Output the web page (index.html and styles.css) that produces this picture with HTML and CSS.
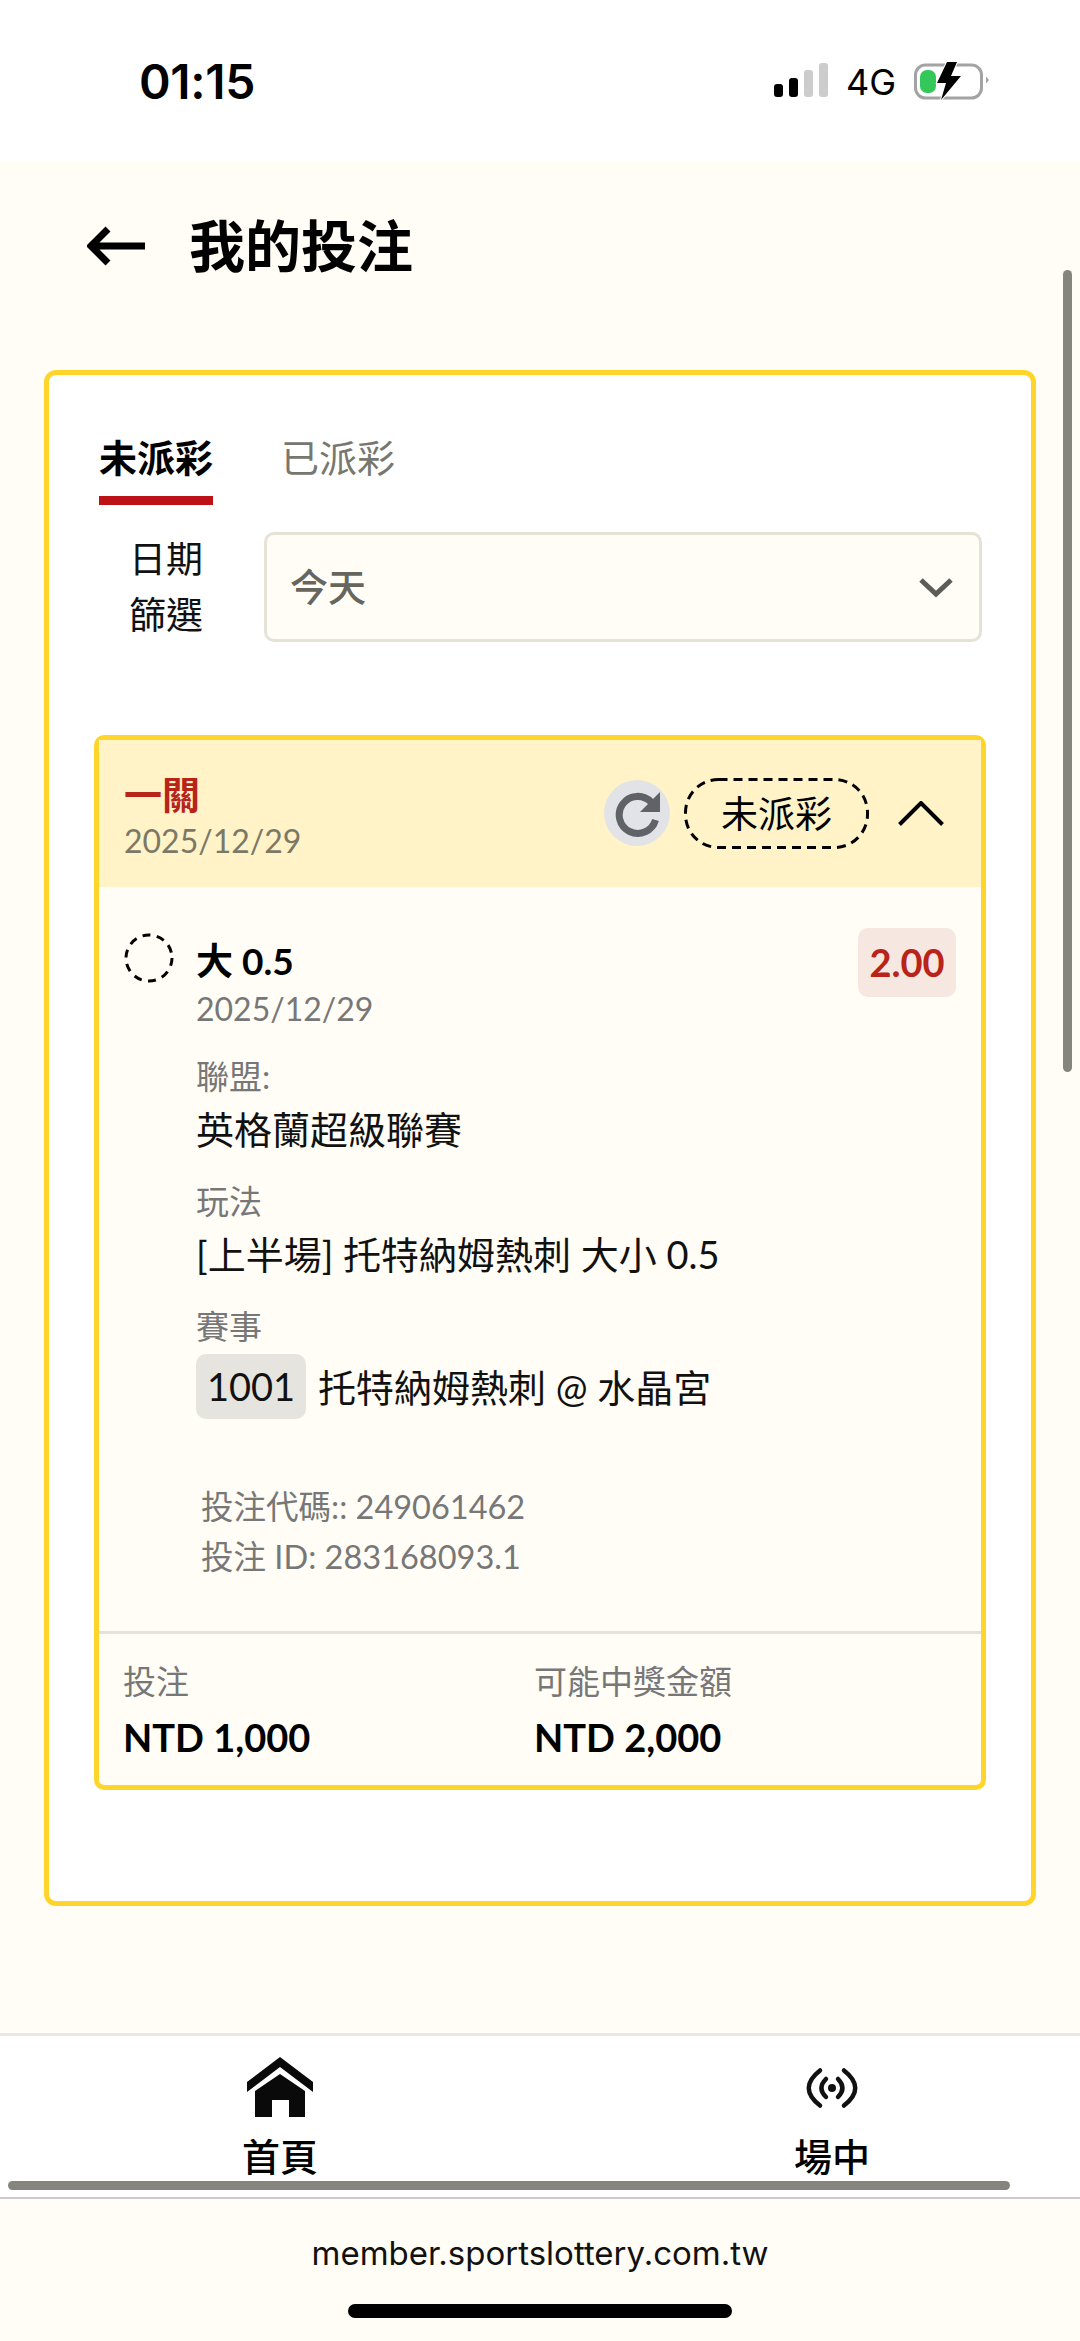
FILE: index.html
```html
<!DOCTYPE html>
<html lang="zh-Hant">

<head>
    <meta charset="UTF-8">
    <meta name="viewport" content="width=device-width, initial-scale=1.0">
    <title>我的投注</title>
    <link rel="stylesheet" href="styles.css">
</head>

<body>
    <div class="status">
        <span class="time">01:15</span>
        <div class="status-right">
            <div class="signal"><i class="s1"></i><i class="s2"></i><i class="s3"></i><i class="s4"></i></div>
            <span class="net">4G</span>
            <svg class="battery" width="76" height="38" viewBox="0 0 76 38">
                <rect x="1.500" y="3" width="66" height="33" rx="10" fill="none" stroke="#a3a3a3" stroke-width="3"/>
                <path d="M72 14.500l3 3.500l-3 3.500z" fill="#a3a3a3"/>
                <rect x="6" y="8" width="16" height="23" rx="7" fill="#34c759"/>
                <path d="M33 0l-10 21h9l-5 17 20-24h-10l6-14z" fill="#000" stroke="#fff" stroke-width="2" paint-order="stroke"/>
            </svg>
        </div>
    </div>

    <div class="page">
        <div class="top">
            <svg class="back" width="60" height="40" viewBox="0 0 60 40">
                <path d="M58 20H5M21 3L4 20l17 17" fill="none" stroke="#000" stroke-width="7"/>
            </svg>
            <h1>我的投注</h1>
        </div>

        <div class="outer">
            <div class="tabs">
                <div class="tab current">未派彩</div>
                <div class="tab">已派彩</div>
            </div>

            <div class="filter">
                <div class="filter-label">日期<br>篩選</div>
                <div class="select">
                    <span class="select-text">今天</span>
                    <svg width="36" height="22" viewBox="0 0 36 22">
                        <path d="M3 4l15 14L33 4" fill="none" stroke="#5c5c58" stroke-width="5"/>
                    </svg>
                </div>
            </div>

            <div class="bet">
                <div class="bet-head">
                    <div>
                        <div class="bet-type">一關</div>
                        <div class="bet-date">2025/12/29</div>
                    </div>
                    <div class="bet-actions">
                        <div class="refresh">
                            <svg width="48" height="48" viewBox="0 0 48 48">
                                <path d="M38 13A18.500 18.500 0 1 0 42.500 31" fill="none" stroke="#5f6368" stroke-width="7"/>
                                <path d="M47 3v20H27z" fill="#5f6368"/>
                            </svg>
                        </div>
                        <div class="pill">
                            <svg class="pill-line" width="185" height="71" viewBox="0 0 185 71">
                                <rect x="1.500" y="1.500" width="182" height="68" rx="33" fill="none" stroke="#000" stroke-width="3" stroke-dasharray="9 6"/>
                            </svg>
                            未派彩
                        </div>
                        <svg class="chevron" width="46" height="25" viewBox="0 0 46 25">
                            <path d="M1.500 23.500L23 2l21.500 21.500" fill="none" stroke="#000" stroke-width="4"/>
                        </svg>
                    </div>
                </div>

                <div class="bet-body">
                    <div class="pick">
                        <svg class="dash-circle" width="50" height="50" viewBox="0 0 50 50">
                            <circle cx="25" cy="25" r="23" fill="none" stroke="#000" stroke-width="3" stroke-dasharray="8 6.450"/>
                        </svg>
                        <div class="pick-text">
                            <div class="pick-name">大 0.5</div>
                            <div class="pick-date">2025/12/29</div>
                        </div>
                        <div class="odds">2.00</div>
                    </div>

                    <div class="info">
                        <div class="info-label">聯盟:</div>
                        <div class="info-value">英格蘭超級聯賽</div>
                    </div>
                    <div class="info">
                        <div class="info-label">玩法</div>
                        <div class="info-value">[上半場] 托特納姆熱刺 大小 0.5</div>
                    </div>
                    <div class="info">
                        <div class="info-label">賽事</div>
                        <div class="info-value match"><span class="code">1001</span>托特納姆熱刺 @ 水晶宮</div>
                    </div>

                    <div class="ids">
                        <div>投注代碼:: 249061462</div>
                        <div>投注 ID: 283168093.1</div>
                    </div>
                </div>

                <div class="bet-foot">
                    <div class="foot-col">
                        <div class="foot-label">投注</div>
                        <div class="foot-value">NTD 1,000</div>
                    </div>
                    <div class="foot-col">
                        <div class="foot-label">可能中獎金額</div>
                        <div class="foot-value">NTD 2,000</div>
                    </div>
                </div>
            </div>
        </div>
    </div>

    <div class="nav">
        <div class="nav-item">
            <svg class="nav-icon" width="66" height="60" viewBox="0 0 66 60">
                <path d="M33 0l33 25v10L33 10 0 35V25z" fill="#0a0a0a"/>
                <path d="M33 17l25 17v26H42V43H25v17H8V34z" fill="#0a0a0a"/>
            </svg>
            <span>首頁</span>
        </div>
        <div class="nav-item">
            <svg class="nav-icon" width="66" height="60" viewBox="0 0 66 60">
                <circle cx="33" cy="31" r="4" fill="#111"/>
                <path d="M27 22Q18 31 27 40M39 22Q48 31 39 40M21 13.500Q-1.500 31 21 48.500M45 13.500Q67.500 31 45 48.500" fill="none" stroke="#111" stroke-width="4.500" stroke-linecap="round"/>
            </svg>
            <span>場中</span>
        </div>
    </div>

    <div class="url-bar">
        <span class="url">member.sportslottery.com.tw</span>
        <div class="home-indicator"></div>
    </div>

    <div class="scroll-y"></div>
    <div class="scroll-x"></div>
</body>

</html>
```

FILE: styles.css
```css
* {
    margin: 0;
    padding: 0;
    box-sizing: border-box;
}

body {
    width: 1080px;
    height: 2341px;
    overflow: hidden;
    position: relative;
    background-color: #fffdf6;
    color: #000;
    font-family: Lato, "Noto Sans CJK TC", sans-serif;
    display: flex;
    flex-direction: column;
}

/* status bar */
.status {
    height: 162px;
    background-color: #fff;
    display: flex;
    justify-content: space-between;
    padding: 54px 90px 0 139px;
    font-family: Inter, "Liberation Sans", sans-serif;
}

.time {
    font-size: 48px;
    line-height: 56px;
    font-weight: 600;
    letter-spacing: -0.3px;
}

.status-right {
    display: flex;
    align-items: flex-start;
}

.signal {
    display: flex;
    align-items: flex-end;
    gap: 6px;
    height: 34px;
    margin-top: 9px;
}

.signal i {
    display: block;
    width: 9px;
    border-radius: 3px;
}

.s1 {
    height: 13px;
    background-color: #000;
}

.s2 {
    height: 19px;
    background-color: #000;
}

.s3 {
    height: 27px;
    background-color: #ccc;
}

.s4 {
    height: 34px;
    background-color: #ccc;
}

.net {
    font-size: 36px;
    line-height: 56px;
    margin-left: 18px;
}

.battery {
    margin: 8px 0 0 18px;
}

/* page */
.page {
    flex: 1;
    padding: 0 44px;
}

.top {
    height: 208px;
    display: flex;
    align-items: flex-start;
    padding: 48px 0 0 43px;
}

.back {
    margin-top: 16px;
}

h1 {
    font-size: 56px;
    line-height: 72px;
    font-weight: 700;
    margin-left: 42px;
}

.outer {
    width: 992px;
    height: 1536px;
    background-color: #fff;
    border: 5px solid #ffd52b;
    border-radius: 12px;
    padding: 0 45px;
}

.tabs {
    display: flex;
    gap: 68px;
    padding: 57px 0 0 5px;
    height: 130px;
}

.tab {
    font-size: 38px;
    line-height: 50px;
    height: 73px;
    color: #77776f;
}

.tab.current {
    color: #000;
    font-weight: 700;
    border-bottom: 9px solid #bd1118;
}

.filter {
    display: flex;
    align-items: center;
    margin-top: 27px;
    height: 110px;
}

.filter-label {
    width: 144px;
    text-align: center;
    font-size: 37px;
    line-height: 56px;
    color: #111;
}

.select {
    width: 718px;
    height: 110px;
    margin-left: 26px;
    padding: 0 25px 0 23px;
    display: flex;
    align-items: center;
    justify-content: space-between;
    background-color: #fffdf6;
    border: 3px solid #e5e2d8;
    border-radius: 10px;
    font-size: 38px;
    font-weight: 500;
    color: #66665f;
}

.select-text {
    padding-bottom: 5px;
}

.bet {
    width: 892px;
    height: 1055px;
    margin-top: 93px;
    background-color: #fffdf6;
    border: 5px solid #ffd52b;
    border-radius: 10px;
    display: flex;
    flex-direction: column;
}

.bet-head {
    height: 147px;
    padding: 29px 37px 0 25px;
    background-color: #fff3c7;
    display: flex;
    justify-content: space-between;
}

.bet-type {
    font-size: 38px;
    line-height: 50px;
    font-weight: 700;
    color: #b8231a;
}

.bet-date {
    font-size: 32px;
    line-height: 44px;
    color: #7b7868;
}

.bet-actions {
    display: flex;
    align-items: center;
    height: 72px;
    margin-top: 8px;
}

.refresh {
    width: 66px;
    height: 66px;
    border-radius: 50%;
    background-color: #e2e3e7;
    display: flex;
    align-items: center;
    justify-content: center;
    margin-right: 14px;
}

.pill {
    position: relative;
    width: 185px;
    height: 71px;
    text-align: center;
    font-size: 37px;
    line-height: 71px;
}

.pill-line {
    position: absolute;
    left: 0;
    top: 0;
}

.chevron {
    margin: 0 0 0 29px;
}

.bet-body {
    flex: 1;
    padding: 41px 25px 0;
}

.pick {
    display: flex;
    align-items: flex-start;
    height: 105px;
}

.dash-circle {
    margin-top: 5px;
}

.pick-text {
    flex: 1;
    margin-left: 22px;
}

.pick-name {
    font-size: 37px;
    line-height: 60px;
    padding-top: 3px;
    height: 59px;
    font-weight: 700;
}

.pick-date {
    font-size: 32px;
    line-height: 44px;
    color: #777;
}

.odds {
    width: 98px;
    height: 69px;
    background-color: #f6e7e1;
    border-radius: 10px;
    text-align: center;
    font-size: 38px;
    line-height: 69px;
    font-weight: 700;
    color: #b8231a;
}

.info {
    padding-left: 72px;
    margin-top: 20px;
}

.info-label {
    font-size: 33px;
    line-height: 47px;
    color: #777;
}

.info-value {
    font-size: 38px;
    line-height: 58px;
    color: #111;
}

.match {
    display: flex;
    align-items: center;
    height: 65px;
    margin-top: 4px;
}

.code {
    width: 110px;
    height: 65px;
    background-color: #e6e4de;
    border-radius: 10px;
    text-align: center;
    line-height: 65px;
    margin-right: 12px;
}

.ids {
    margin: 63px 0 0 77px;
    font-size: 32.500px;
    line-height: 50px;
    color: #777;
}

.bet-foot {
    height: 154px;
    border-top: 3px solid #e5e2dc;
    padding: 21px 24px 0;
    display: flex;
}

.foot-col {
    width: 411px;
}

.foot-label {
    font-size: 33px;
    line-height: 53px;
    color: #777;
}

.foot-value {
    font-size: 38px;
    line-height: 58px;
    font-weight: 700;
}

/* bottom nav */
.nav {
    height: 166px;
    background-color: #fff;
    border-top: 3px solid #e8e8e8;
    border-bottom: 2px solid #ccc;
    display: grid;
    grid-template-columns: 552px 552px;
    padding-left: 4px;
    overflow: hidden;
}

.nav-item {
    display: flex;
    flex-direction: column;
    align-items: center;
    padding-top: 21px;
    font-size: 38px;
    line-height: 46px;
    font-weight: 500;
}

.nav-item span {
    margin-top: 16px;
}

.url-bar {
    height: 142px;
    display: flex;
    flex-direction: column;
    align-items: center;
    padding-top: 34px;
}

.url {
    font-family: Inter, "Liberation Sans", sans-serif;
    font-size: 33px;
    line-height: 40px;
    color: #111;
}

.home-indicator {
    width: 384px;
    height: 14px;
    margin-top: 31px;
    background-color: #000;
    border-radius: 7px;
}

/* scrollbars lie over the content */
.scroll-y {
    position: absolute;
    left: 1063px;
    top: 270px;
    width: 9px;
    height: 802px;
    background-color: #85857d;
    border-radius: 5px;
}

.scroll-x {
    position: absolute;
    left: 8px;
    top: 2181px;
    width: 1002px;
    height: 9px;
    background-color: #85857d;
    border-radius: 5px;
}
```
